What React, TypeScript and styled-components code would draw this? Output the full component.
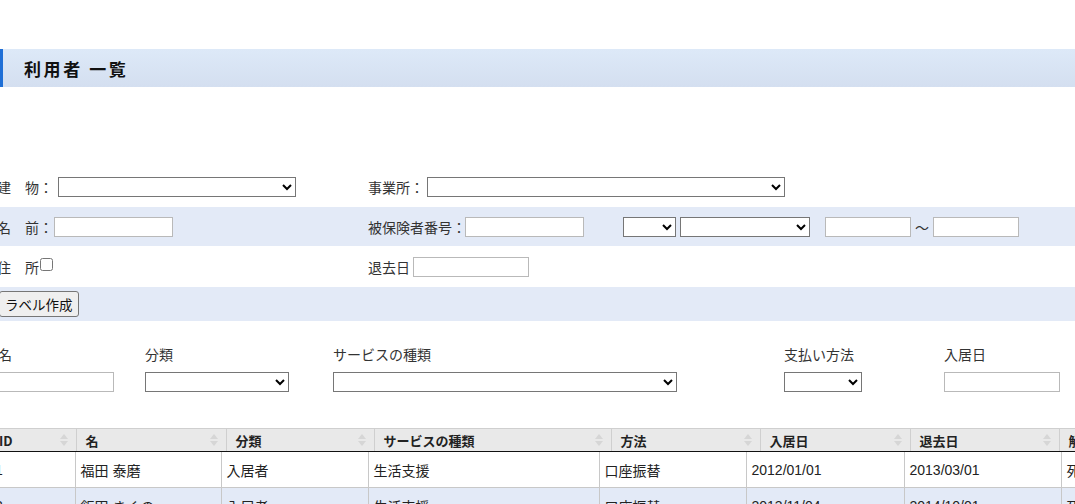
import styled, { createGlobalStyle } from 'styled-components'

const GlobalStyle = createGlobalStyle`
    html, body {
        margin: 0;
        padding: 0;
        overflow: hidden;
        background: #fff;
    }
    body {
        font-family: "Liberation Sans", "Noto Sans CJK JP", sans-serif;
        font-size: 14px;
        color: #222;
    }
`;

const Page = styled.div`
    width: 1075px;
    padding-top: 49px;
`;

const TitleBar = styled.div`
    height: 38px;
    display: flex;
    align-items: center;
    border-left: 3px solid #1f6fd6;
    background: linear-gradient(to bottom, #dde9f8, #d4dff0);
    padding-left: 21px;

    & > h2 {
        margin: 0;
        font-family: "Noto Sans CJK JP", sans-serif;
        font-size: 17px;
        font-weight: 700;
        letter-spacing: 2.6px;
        color: #111;
    }
`;

const Form = styled.div`
    margin-top: 80px;
    margin-left: -3px;
`;

const FormRow = styled.div<{ $h: number; $shaded?: boolean }>`
    display: grid;
    grid-template-columns: 371px 1fr;
    align-items: center;
    height: ${p => p.$h}px;
    background: ${p => (p.$shaded ? '#e3eaf7' : '#fff')};
`;

const Cell = styled.div`
    display: flex;
    align-items: center;
`;

const Label = styled.span<{ $w: number }>`
    width: ${p => p.$w}px;
    flex: none;
    font-family: "Noto Sans CJK JP", sans-serif;
    font-size: 14px;
    color: #333;
    white-space: nowrap;
`;

const Select = styled.select<{ $w: number; $ml?: number }>`
    width: ${p => p.$w}px;
    height: 20px;
    margin: 0 0 0 ${p => p.$ml ?? 0}px;
    padding: 0 2px;
    border: 1px solid #767676;
    border-radius: 0;
    background: #fff;
    font-size: 13px;
    box-sizing: border-box;
`;

const TextInput = styled.input<{ $w: number; $ml?: number }>`
    width: ${p => p.$w}px;
    height: 20px;
    margin: 0 0 0 ${p => p.$ml ?? 0}px;
    padding: 0 3px;
    border: 1px solid #b9b9b9;
    border-radius: 0;
    background: #fff;
    font-size: 13px;
    box-sizing: border-box;
`;

const Check = styled.input`
    width: 13px;
    height: 13px;
    margin: 0 0 4px 1px;
`;

const Tilde = styled.span`
    width: 22px;
    text-align: center;
    font-family: "Noto Sans CJK JP", sans-serif;
    color: #333;
`;

const Button = styled.button`
    margin-left: 2px;
    height: 26px;
    padding: 0 5px;
    font-family: "Noto Sans CJK JP", sans-serif;
    font-size: 13.5px;
    color: #111;
    background: #efefef;
    border: 1px solid #767676;
    border-radius: 3px;
`;

const Filters = styled.div`
    display: flex;
    margin-top: 23px;
    margin-left: -6px;
`;

const FilterGroup = styled.div<{ $w: number }>`
    width: ${p => p.$w}px;
    flex: none;
    display: flex;
    flex-direction: column;
    align-items: flex-start;
    gap: 8px;
`;

const FilterLabel = styled.span<{ $indent?: number }>`
    height: 20px;
    line-height: 20px;
    padding-left: ${p => p.$indent ?? 0}px;
    font-family: "Noto Sans CJK JP", sans-serif;
    font-size: 14px;
    color: #333;
`;

const TableWrap = styled.div`
    margin-top: 36px;
    margin-left: -10px;
`;

const Table = styled.table`
    border-collapse: collapse;
    table-layout: fixed;
`;

const Th = styled.th`
    position: relative;
    height: 22px;
    padding: 0 18px 0 9px;
    text-align: left;
    font-family: "Noto Sans CJK JP", sans-serif;
    font-size: 13px;
    font-weight: 700;
    color: #222;
    background: #e9e9e9;
    border-top: 1px solid #cfcfcf;
    border-right: 1px solid #cfcfcf;
    border-bottom: 1px solid #111;
    white-space: nowrap;
    overflow: hidden;

    &::before, &::after {
        content: '';
        position: absolute;
        right: 8px;
        border-left: 4px solid transparent;
        border-right: 4px solid transparent;
    }
    &::before {
        top: 5px;
        border-bottom: 5px solid #d6d6d6;
    }
    &::after {
        top: 12px;
        border-top: 5px solid #d6d6d6;
    }
`;

const Tr = styled.tr<{ $alt?: boolean }>`
    background: ${p => (p.$alt ? '#e3eaf7' : '#fff')};
`;

const Td = styled.td`
    height: 35px;
    padding: 0 5px;
    font-family: "Liberation Sans", "Noto Sans CJK JP", sans-serif;
    font-size: 14px;
    color: #222;
    border-right: 1px solid #c8c8c8;
    border-bottom: 1px solid #c8c8c8;
    white-space: nowrap;
    overflow: hidden;
`;

const headCols = [86, 150, 148, 237, 149, 150, 149, 150];
const bodyCols = [85, 146, 147, 231, 147, 158, 157, 150];
const heads = ['ID', '名', '分類', 'サービスの種類', '方法', '入居日', '退去日', '解約理由'];

const rows = [
    ['1', '福田 泰磨', '入居者', '生活支援', '口座振替', '2012/01/01', '2013/03/01', '死亡'],
    ['2', '飯田 きくの', '入居者', '生活支援', '口座振替', '2013/11/04', '2014/10/01', '死亡'],
];

export default function App() {
    return (
        <Page>
            <GlobalStyle />
            <TitleBar>
                <h2>利用者 一覧</h2>
            </TitleBar>

            <Form>
                <FormRow $h={40}>
                    <Cell>
                        <Label $w={61}>建　物：</Label>
                        <Select $w={238}><option></option></Select>
                    </Cell>
                    <Cell>
                        <Label $w={59}>事業所：</Label>
                        <Select $w={358}><option></option></Select>
                    </Cell>
                </FormRow>
                <FormRow $h={39} $shaded>
                    <Cell>
                        <Label $w={57}>名　前：</Label>
                        <TextInput $w={119} />
                    </Cell>
                    <Cell>
                        <Label $w={97}>被保険者番号：</Label>
                        <TextInput $w={119} />
                        <Select $w={53} $ml={39}><option></option></Select>
                        <Select $w={130} $ml={4}><option></option></Select>
                        <TextInput $w={86} $ml={15} />
                        <Tilde>～</Tilde>
                        <TextInput $w={86} />
                    </Cell>
                </FormRow>
                <FormRow $h={41}>
                    <Cell>
                        <Label $w={42}>住　所</Label>
                        <Check type="checkbox" />
                    </Cell>
                    <Cell>
                        <Label $w={45}>退去日</Label>
                        <TextInput $w={116} />
                    </Cell>
                </FormRow>
                <FormRow $h={34} $shaded>
                    <Cell>
                        <Button>ラベル作成</Button>
                    </Cell>
                </FormRow>
            </Form>

            <Filters>
                <FilterGroup $w={151}>
                    <FilterLabel $indent={4}>名</FilterLabel>
                    <TextInput $w={120} />
                </FilterGroup>
                <FilterGroup $w={188}>
                    <FilterLabel>分類</FilterLabel>
                    <Select $w={144}><option></option></Select>
                </FilterGroup>
                <FilterGroup $w={451}>
                    <FilterLabel>サービスの種類</FilterLabel>
                    <Select $w={344}><option></option></Select>
                </FilterGroup>
                <FilterGroup $w={160}>
                    <FilterLabel>支払い方法</FilterLabel>
                    <Select $w={78}><option></option></Select>
                </FilterGroup>
                <FilterGroup $w={131}>
                    <FilterLabel>入居日</FilterLabel>
                    <TextInput $w={116} />
                </FilterGroup>
            </Filters>

            <TableWrap>
                <Table style={{ width: headCols.reduce((a, b) => a + b, 0) }}>
                    <colgroup>
                        {headCols.map((w, i) => <col key={i} style={{ width: w }} />)}
                    </colgroup>
                    <thead>
                        <tr>
                            {heads.map(h => <Th key={h}>{h}</Th>)}
                        </tr>
                    </thead>
                </Table>
                <Table style={{ width: bodyCols.reduce((a, b) => a + b, 0) }}>
                    <colgroup>
                        {bodyCols.map((w, i) => <col key={i} style={{ width: w }} />)}
                    </colgroup>
                    <tbody>
                        {rows.map((r, i) => (
                            <Tr key={r[0]} $alt={i % 2 === 1}>
                                {r.map((c, j) => <Td key={j}>{c}</Td>)}
                            </Tr>
                        ))}
                    </tbody>
                </Table>
            </TableWrap>
        </Page>
    )
}
